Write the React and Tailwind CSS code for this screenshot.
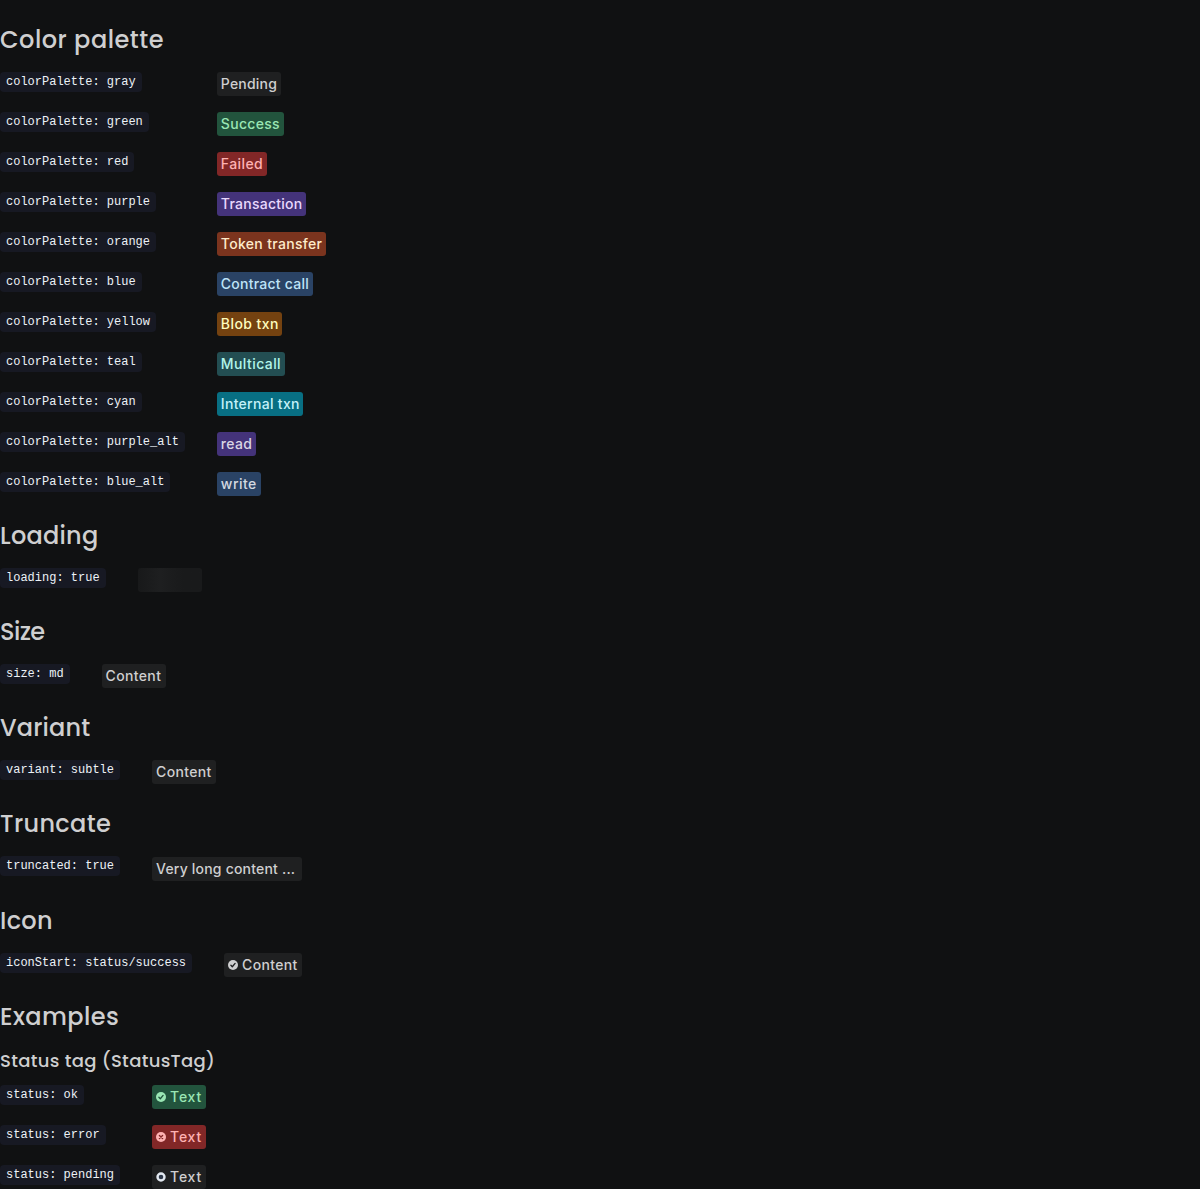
const COLORS = {
  gray: 'bg-[#1f2021] text-[#cfcfd0]',
  green: 'bg-[#22543d] text-[#9ae6b4]',
  red: 'bg-[#822727] text-[#feb2b2]',
  purple: 'bg-[#44337a] text-[#e9d8fd]',
  orange: 'bg-[#7b341e] text-[#feebcb]',
  blue: 'bg-[#2a4365] text-[#bee3f8]',
  yellow: 'bg-[#744210] text-[#fefcbf]',
  teal: 'bg-[#234e52] text-[#b2f5ea]',
  cyan: 'bg-[#086f83] text-[#c4f1f9]',
  purple_alt: 'bg-[#44337a] text-[#dad6e4]',
  blue_alt: 'bg-[#2a4365] text-[#d4d9e0]',
};

const PALETTE = [
  ['gray', 'Pending', 'w-16 tracking-[0.2px]'],
  ['green', 'Success', 'w-[67px] tracking-[0.3px]'],
  ['red', 'Failed', 'w-[50px] tracking-[0.4px]'],
  ['purple', 'Transaction', 'w-[89px] tracking-[0.25px]'],
  ['orange', 'Token transfer', 'w-[109px] tracking-[0.32px]'],
  ['blue', 'Contract call', 'w-24 tracking-[0.25px]'],
  ['yellow', 'Blob txn', 'w-[65px] tracking-[0.42px]'],
  ['teal', 'Multicall', 'w-[68px] tracking-[0.42px]'],
  ['cyan', 'Internal txn', 'w-[86px] tracking-[0.3px]'],
  ['purple_alt', 'read', 'w-[39px] tracking-[0.3px]'],
  ['blue_alt', 'write', 'w-11 tracking-[0.45px]'],
];

function StatusIcon({ kind }) {
  if (kind === 'pending') {
    return (
      <svg viewBox="0 0 10 10" className="size-2.5 shrink-0">
        <circle cx="5" cy="5" r="3.5" fill="#2d3748" stroke="#e2e8f0" strokeWidth="2.4" />
      </svg>
    );
  }
  return (
    <svg viewBox="0 0 10 10" className="size-2.5 shrink-0">
      <mask id={`cut-${kind}`}>
        <rect width="10" height="10" fill="white" />
        <path
          d={kind === 'success' ? 'M2.9 5.3 4.3 6.7 7.1 3.4' : 'M3.4 3.4 6.6 6.6M6.6 3.4 3.4 6.6'}
          fill="none"
          stroke="black"
          strokeWidth="1.35"
          strokeLinecap="round"
          strokeLinejoin="round"
        />
      </mask>
      <circle cx="5" cy="5" r="5" fill="currentColor" mask={`url(#cut-${kind})`} />
    </svg>
  );
}

function Tag({ color = 'gray', icon, width = 'w-16 tracking-[0.35px]', children }) {
  return (
    <span
      className={`inline-flex h-6 items-center gap-1 rounded-[3px] px-1 font-[Inter,sans-serif] text-sm leading-5 font-medium whitespace-nowrap ${width} ${COLORS[color]}`}
    >
      {icon && <StatusIcon kind={icon} />}
      <span>{children}</span>
    </span>
  );
}

function Code({ children }) {
  return (
    <code className="h-5 justify-self-start rounded bg-[#171923] px-1.5 font-['Liberation_Mono',monospace] text-xs leading-5 whitespace-pre text-[#edf2f7]">
      {children}
    </code>
  );
}

function Heading({ spacing, children }) {
  return (
    <h2 className={`font-[Poppins,Lato,sans-serif] text-2xl leading-8 font-medium whitespace-nowrap text-[#cfcfd0] ${spacing}`}>
      {children}
    </h2>
  );
}

function Section({ title, spacing, children }) {
  return (
    <section className="mt-6">
      <Heading spacing={spacing}>{title}</Heading>
      <div className="mt-4 grid grid-cols-[max-content_max-content] items-start gap-x-8 gap-y-4">{children}</div>
    </section>
  );
}

export default function App() {
  return (
    <main className="flex h-[1189px] flex-col overflow-hidden bg-[#101112]">
      <Section title="Color palette" spacing="tracking-[0.52px]">
        {PALETTE.map(([color, label, width]) => [
          <Code key={color}>{`colorPalette: ${color}`}</Code>,
          <Tag key={label} color={color} width={width}>{label}</Tag>,
        ])}
      </Section>

      <Section title="Loading" spacing="tracking-[0.25px]">
        <Code>loading: true</Code>
        <div className="h-6 w-16 rounded-[3px] bg-linear-to-r from-[#18191a] via-[#1e1f20] via-35% to-[#191a1b] to-70%" />
      </Section>

      <Section title="Size" spacing="tracking-[-0.6px]">
        <Code>size: md</Code>
        <Tag>Content</Tag>
      </Section>

      <Section title="Variant" spacing="tracking-[0.15px]">
        <Code>variant: subtle</Code>
        <Tag>Content</Tag>
      </Section>

      <Section title="Truncate" spacing="tracking-[0.35px]">
        <Code>truncated: true</Code>
        <div className="flex pt-px">
          <Tag width="w-[150px] tracking-[0.2px]">Very long content ...</Tag>
        </div>
      </Section>

      <Section title="Icon" spacing="tracking-[0.3px]">
        <Code>iconStart: status/success</Code>
        <Tag icon="success" width="w-[78px] tracking-[0.35px]">Content</Tag>
      </Section>

      <section className="mt-6">
        <Heading spacing="tracking-[0.4px]">Examples</Heading>
        <h3 className="mt-4 font-[Poppins,Lato,sans-serif] text-lg leading-6 font-medium tracking-[0.32px] whitespace-nowrap text-[#cfcfd0]">
          Status tag (StatusTag)
        </h3>
        <div className="mt-3 grid grid-cols-[max-content_max-content] items-start gap-x-8 gap-y-4">
          <Code>status: ok</Code>
          <Tag color="green" icon="success" width="w-[54px] tracking-[0.8px]">Text</Tag>
          <Code>status: error</Code>
          <Tag color="red" icon="error" width="w-[54px] tracking-[0.8px]">Text</Tag>
          <Code>status: pending</Code>
          <Tag icon="pending" width="w-[54px] tracking-[0.8px]">Text</Tag>
        </div>
      </section>
    </main>
  );
}
